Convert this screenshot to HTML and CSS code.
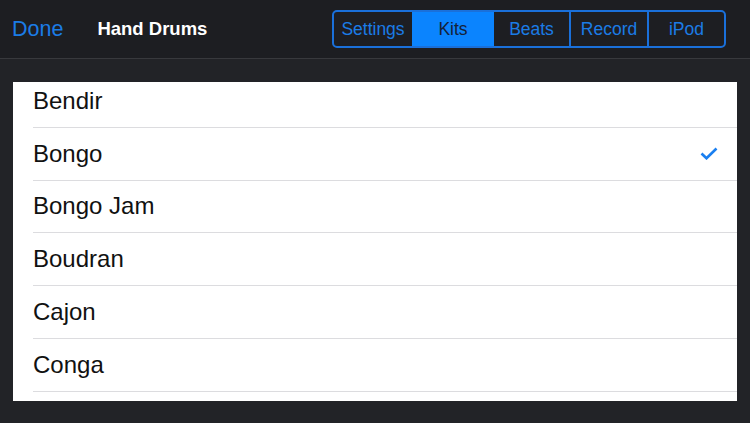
FILE: index.html
```html
<!DOCTYPE html>
<html lang="en">
<head>
    <meta charset="UTF-8">
    <title>Hand Drums</title>
    <link rel="stylesheet" href="styles.css">
</head>
<body>
    <div class="navbar">
        <a class="done" href="#">Done</a>
        <div class="title">Hand Drums</div>
        <div class="segments">
            <div class="segment">Settings</div>
            <div class="segment selected">Kits</div>
            <div class="segment">Beats</div>
            <div class="segment">Record</div>
            <div class="segment">iPod</div>
        </div>
    </div>

    <div class="panel">
        <ul class="kit-list">
            <li class="kit">Bendir</li>
            <li class="kit">
                Bongo
                <svg class="check" width="18" height="13" viewBox="0 0 18 13">
                    <path d="M1.5 6.5 L6.5 11.3 L16.5 1.5" fill="none" stroke="#1a7ff0" stroke-width="2.6" stroke-linecap="butt" stroke-linejoin="miter"/>
                </svg>
            </li>
            <li class="kit">Bongo Jam</li>
            <li class="kit">Boudran</li>
            <li class="kit">Cajon</li>
            <li class="kit">Conga</li>
        </ul>
    </div>
</body>
</html>
```

FILE: styles.css
```css
body {
    margin: 0;
    background-color: #222327;
    font-family: "Liberation Sans", Arial, sans-serif;
}
.navbar {
    height: 58px;
    display: flex;
    align-items: center;
    background-color: #1d1e22;
    border-bottom: 1px solid #38393d;
}
.done {
    margin-left: 12px;
    color: #1b7ce6;
    font-size: 21.5px;
    text-decoration: none;
}
.title {
    margin-left: 34px;
    color: #ffffff;
    font-size: 18.5px;
    font-weight: bold;
}
.segments {
    display: flex;
    margin-left: auto;
    margin-right: 24px;
    height: 38px;
    border: 2px solid #1a70da;
    border-radius: 5px;
    overflow: hidden;
    box-sizing: border-box;
}
.segment {
    display: flex;
    align-items: center;
    justify-content: center;
    color: #1b7ce6;
    font-size: 17.5px;
    border-left: 2px solid #1a70da;
}
.segment:first-child {
    border-left: none;
    width: 78px;
}
.segment:nth-child(2) {
    width: 82px;
}
.segment:nth-child(3) {
    width: 75px;
}
.segment:nth-child(4) {
    width: 76px;
}
.segment:nth-child(5) {
    width: 75px;
}
.segment.selected {
    background-color: #0b84fe;
    color: #152238;
    border-left: none;
}
.segment.selected + .segment {
    border-left: none;
}
.panel {
    margin: 23px 0 0 13px;
    width: 724px;
    height: 319px;
    background-color: #ffffff;
    overflow: hidden;
}
.kit-list {
    list-style: none;
    margin: -7px 0 0 20px;
    padding: 0;
}
.kit {
    height: 51.8px;
    display: flex;
    align-items: center;
    justify-content: space-between;
    padding-right: 19px;
    border-bottom: 1px solid #dcdcdf;
    color: #111111;
    font-size: 24px;
}
.check {
    display: block;
}
```
